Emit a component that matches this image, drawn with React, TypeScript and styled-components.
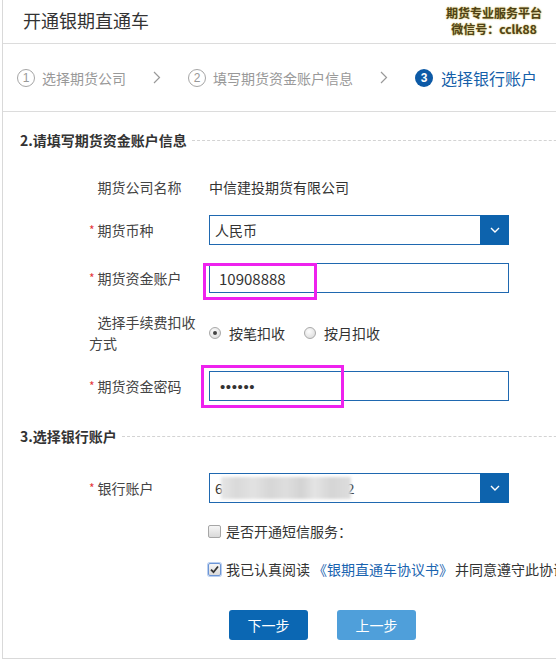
import React from "react";
import styled, { createGlobalStyle, css } from "styled-components";

const Global = createGlobalStyle`
  html, body { margin: 0; padding: 0; background: #fff; overflow: hidden; }
  body { font-family: "Noto Sans CJK SC", "Microsoft YaHei", sans-serif; color: #333; }
  * { box-sizing: border-box; }
`;

const Frame = styled.div`
  margin-left: 2px;
  width: 600px;
  height: 659px;
  border-left: 1px solid #d9d9d9;
  border-bottom: 1px solid #d9d9d9;
  display: flex;
  flex-direction: column;
`;

const Header = styled.div`
  height: 44px;
  border-bottom: 1px solid #dcdcdc;
  display: flex;
  align-items: center;
  justify-content: space-between;
  padding: 0 60px 0 20px;
`;

const Title = styled.div`
  font-size: 18px;
  line-height: 24px;
  color: #333;
  margin-top: -3px;
`;

const Brand = styled.div`
  display: flex;
  flex-direction: column;
  align-items: center;
  font-size: 12px;
  font-weight: bold;
  line-height: 16px;
  color: #4f4216;
  text-shadow: 0 0 2px #d8c878, 0 0 1px #c9b25a;
  margin-top: -1px;
`;

const Steps = styled.div`
  height: 68px;
  border-bottom: 1px solid #dcdcdc;
  display: flex;
  align-items: center;
  padding-left: 14px;
`;

const Step = styled.div<{ $active?: boolean }>`
  display: flex;
  align-items: center;
  gap: ${(p) => (p.$active ? "8px" : "7px")};
  font-size: ${(p) => (p.$active ? "16px" : "14px")};
  line-height: 20px;
  color: ${(p) => (p.$active ? "#1560a9" : "#999")};
`;

const StepNum = styled.span<{ $active?: boolean }>`
  width: 18px;
  height: 18px;
  border-radius: 50%;
  display: inline-flex;
  align-items: center;
  justify-content: center;
  font-family: "Liberation Sans", Arial, sans-serif;
  font-size: 12px;
  line-height: 1;
  ${(p) =>
    p.$active
      ? css`
          background: #0d5aa6;
          color: #fff;
          font-weight: bold;
        `
      : css`
          border: 1px solid #a5a5a5;
          color: #999;
        `}
`;

const Chevron = styled.span`
  display: inline-flex;
  margin: 0 27px 0 27px;
`;

const SectionTitle = styled.div<{ $mt: number }>`
  margin-top: ${(p) => p.$mt}px;
  padding-left: 17px;
  display: flex;
  align-items: center;
  gap: 5px;
  font-size: 14px;
  font-weight: bold;
  line-height: 20px;
  color: #333;
  &::after {
    content: "";
    flex: 1;
    border-top: 1px dashed #d3d3d3;
    margin-top: 1px;
  }
`;

const Row = styled.div<{ $mt: number; $h?: number }>`
  margin-top: ${(p) => p.$mt}px;
  padding-left: 86px;
  display: grid;
  grid-template-columns: 120px 300px;
  align-items: center;
  min-height: ${(p) => p.$h ?? 30}px;
`;

const Label = styled.div`
  font-size: 14px;
  line-height: 21px;
  color: #444;
  width: 112px;
`;

const Star = styled.span<{ $hidden?: boolean }>`
  display: inline-block;
  width: 8.5px;
  color: #e4393c;
  font-size: 12px;
  vertical-align: top;
  line-height: 20px;
  visibility: ${(p) => (p.$hidden ? "hidden" : "visible")};
`;

const Value = styled.div`
  font-size: 14px;
  color: #333;
  line-height: 20px;
`;

const Field = styled.div`
  position: relative;
  height: 30px;
  border: 1px solid #1f68b0;
  display: flex;
  align-items: center;
  background: #fff;
`;

const FieldText = styled.span<{ $pl: number; $size?: number }>`
  padding-left: ${(p) => p.$pl}px;
  font-size: ${(p) => p.$size ?? 14}px;
  color: #333;
  flex: 1;
  display: flex;
  align-items: center;
  white-space: nowrap;
`;

const SelectBtn = styled.span`
  width: 29px;
  align-self: stretch;
  margin: -1px -1px -1px 0;
  background: #0d63ad;
  display: flex;
  align-items: center;
  justify-content: center;
`;

const Highlight = styled.span<{ $l: number; $t: number; $w: number; $h: number }>`
  position: absolute;
  left: ${(p) => p.$l}px;
  top: ${(p) => p.$t}px;
  width: ${(p) => p.$w}px;
  height: ${(p) => p.$h}px;
  border: 3px solid #ee22ee;
  pointer-events: none;
`;

const Dots = styled.span`
  font-family: "Liberation Sans", Arial, sans-serif;
  font-size: 15px;
  letter-spacing: 0.6px;
  color: #333;
`;

const Blur = styled.span`
  display: inline-block;
  width: 130px;
  height: 22px;
  margin-left: -2px;
  margin-right: -4px;
  position: relative;
  background: linear-gradient(
    90deg,
    #e6e6e6 0%,
    #d9d9d9 12%,
    #e2e2e2 25%,
    #d6d6d6 38%,
    #dedede 50%,
    #d3d3d3 62%,
    #e4e4e4 72%,
    #d5d5d5 85%,
    #dddddd 100%
  );
  filter: blur(1.5px);
`;

const Radios = styled.div`
  display: flex;
  align-items: center;
  font-size: 14px;
  color: #333;
  gap: 19px;
`;

const RadioItem = styled.label`
  display: flex;
  align-items: center;
  gap: 8px;
`;

const Radio = styled.span<{ $checked?: boolean }>`
  width: 12px;
  height: 12px;
  border-radius: 50%;
  border: 1px solid #a9a9a9;
  background: radial-gradient(circle at 40% 35%, #fdfdfd 0%, #e2e2e2 70%, #d2d2d2 100%);
  display: inline-flex;
  align-items: center;
  justify-content: center;
  &::after {
    content: "";
    width: 4px;
    height: 4px;
    border-radius: 50%;
    background: ${(p) => (p.$checked ? "#444" : "transparent")};
  }
`;

const CheckRow = styled.div<{ $mt: number }>`
  margin-top: ${(p) => p.$mt}px;
  padding-left: 205px;
  display: flex;
  align-items: center;
  gap: 5px;
  font-size: 14px;
  line-height: 20px;
  color: #333;
  white-space: nowrap;
`;

const Check = styled.span<{ $checked?: boolean }>`
  width: 13px;
  height: 13px;
  border-radius: 2px;
  border: 1px solid ${(p) => (p.$checked ? "#6c95d6" : "#a6a6a6")};
  box-shadow: ${(p) => (p.$checked ? "0 0 0 1px #b9cff0" : "none")};
  background: linear-gradient(#f6f6f6, #d9d9d9);
  display: inline-flex;
  align-items: center;
  justify-content: center;
`;

const Link = styled.span`
  color: #1a64b0;
  margin: 0 -3px 0 -2px;
`;

const Buttons = styled.div`
  margin-top: 31px;
  padding-left: 226px;
  display: flex;
  gap: 29px;
`;

const Button = styled.button<{ $primary?: boolean }>`
  width: 79px;
  height: 30px;
  border: none;
  border-radius: 3px;
  background: ${(p) => (p.$primary ? "#0b67b3" : "#4f9fda")};
  color: #fff;
  font-family: inherit;
  font-size: 14px;
  padding: 0;
  cursor: pointer;
`;

const ChevronRight = () => (
  <svg width="8" height="13" viewBox="0 0 8 13">
    <polyline points="1,1 6.5,6.5 1,12" fill="none" stroke="#999" strokeWidth="1.2" />
  </svg>
);

const ChevronDown = () => (
  <svg width="10" height="6" viewBox="0 0 10 6">
    <polyline points="1,1 5,5 9,1" fill="none" stroke="#fff" strokeWidth="1.4" />
  </svg>
);

const Tick = () => (
  <svg width="9" height="9" viewBox="0 0 9 9">
    <path d="M1 4.6 L3.5 7.2 L8 1.5" fill="none" stroke="#333" strokeWidth="1.8" />
  </svg>
);

export default function App() {
  return (
    <>
      <Global />
      <Frame>
        <Header>
          <Title>开通银期直通车</Title>
          <Brand>
            <span>期货专业服务平台</span>
            <span>微信号：cclk88</span>
          </Brand>
        </Header>
        <Steps>
          <Step>
            <StepNum>1</StepNum>选择期货公司
          </Step>
          <Chevron>
            <ChevronRight />
          </Chevron>
          <Step>
            <StepNum>2</StepNum>填写期货资金账户信息
          </Step>
          <Chevron>
            <ChevronRight />
          </Chevron>
          <Step $active>
            <StepNum $active>3</StepNum>选择银行账户
          </Step>
        </Steps>

        <SectionTitle $mt={18}>2.请填写期货资金账户信息</SectionTitle>

        <Row $mt={22}>
          <Label>
            <Star $hidden>*</Star>期货公司名称
          </Label>
          <Value>中信建投期货有限公司</Value>
        </Row>
        <Row $mt={13}>
          <Label>
            <Star>*</Star>期货币种
          </Label>
          <Field>
            <FieldText $pl={5}>人民币</FieldText>
            <SelectBtn>
              <ChevronDown />
            </SelectBtn>
          </Field>
        </Row>
        <Row $mt={18}>
          <Label>
            <Star>*</Star>期货资金账户
          </Label>
          <Field>
            <FieldText $pl={9} $size={15}>10908888</FieldText>
            <Highlight $l={-7} $t={-1} $w={114} $h={37} />
          </Field>
        </Row>
        <Row $mt={19} $h={42}>
          <Label>
            <Star $hidden>*</Star>选择手续费扣收方式
          </Label>
          <Radios>
            <RadioItem>
              <Radio $checked />
              按笔扣收
            </RadioItem>
            <RadioItem>
              <Radio />
              按月扣收
            </RadioItem>
          </Radios>
        </Row>
        <Row $mt={17}>
          <Label>
            <Star>*</Star>期货资金密码
          </Label>
          <Field>
            <FieldText $pl={10}>
              <Dots>••••••</Dots>
            </FieldText>
            <Highlight $l={-9} $t={-7} $w={143} $h={43} />
          </Field>
        </Row>

        <SectionTitle $mt={25}>3.选择银行账户</SectionTitle>

        <Row $mt={27}>
          <Label>
            <Star>*</Star>银行账户
          </Label>
          <Field>
            <FieldText $pl={5}>
              6<Blur />2
            </FieldText>
            <SelectBtn>
              <ChevronDown />
            </SelectBtn>
          </Field>
        </Row>

        <CheckRow $mt={18}>
          <Check />
          是否开通短信服务：
        </CheckRow>
        <CheckRow $mt={18}>
          <Check $checked>
            <Tick />
          </Check>
          我已认真阅读<Link>《银期直通车协议书》</Link>并同意遵守此协议
        </CheckRow>

        <Buttons>
          <Button $primary>下一步</Button>
          <Button>上一步</Button>
        </Buttons>
      </Frame>
    </>
  );
}
